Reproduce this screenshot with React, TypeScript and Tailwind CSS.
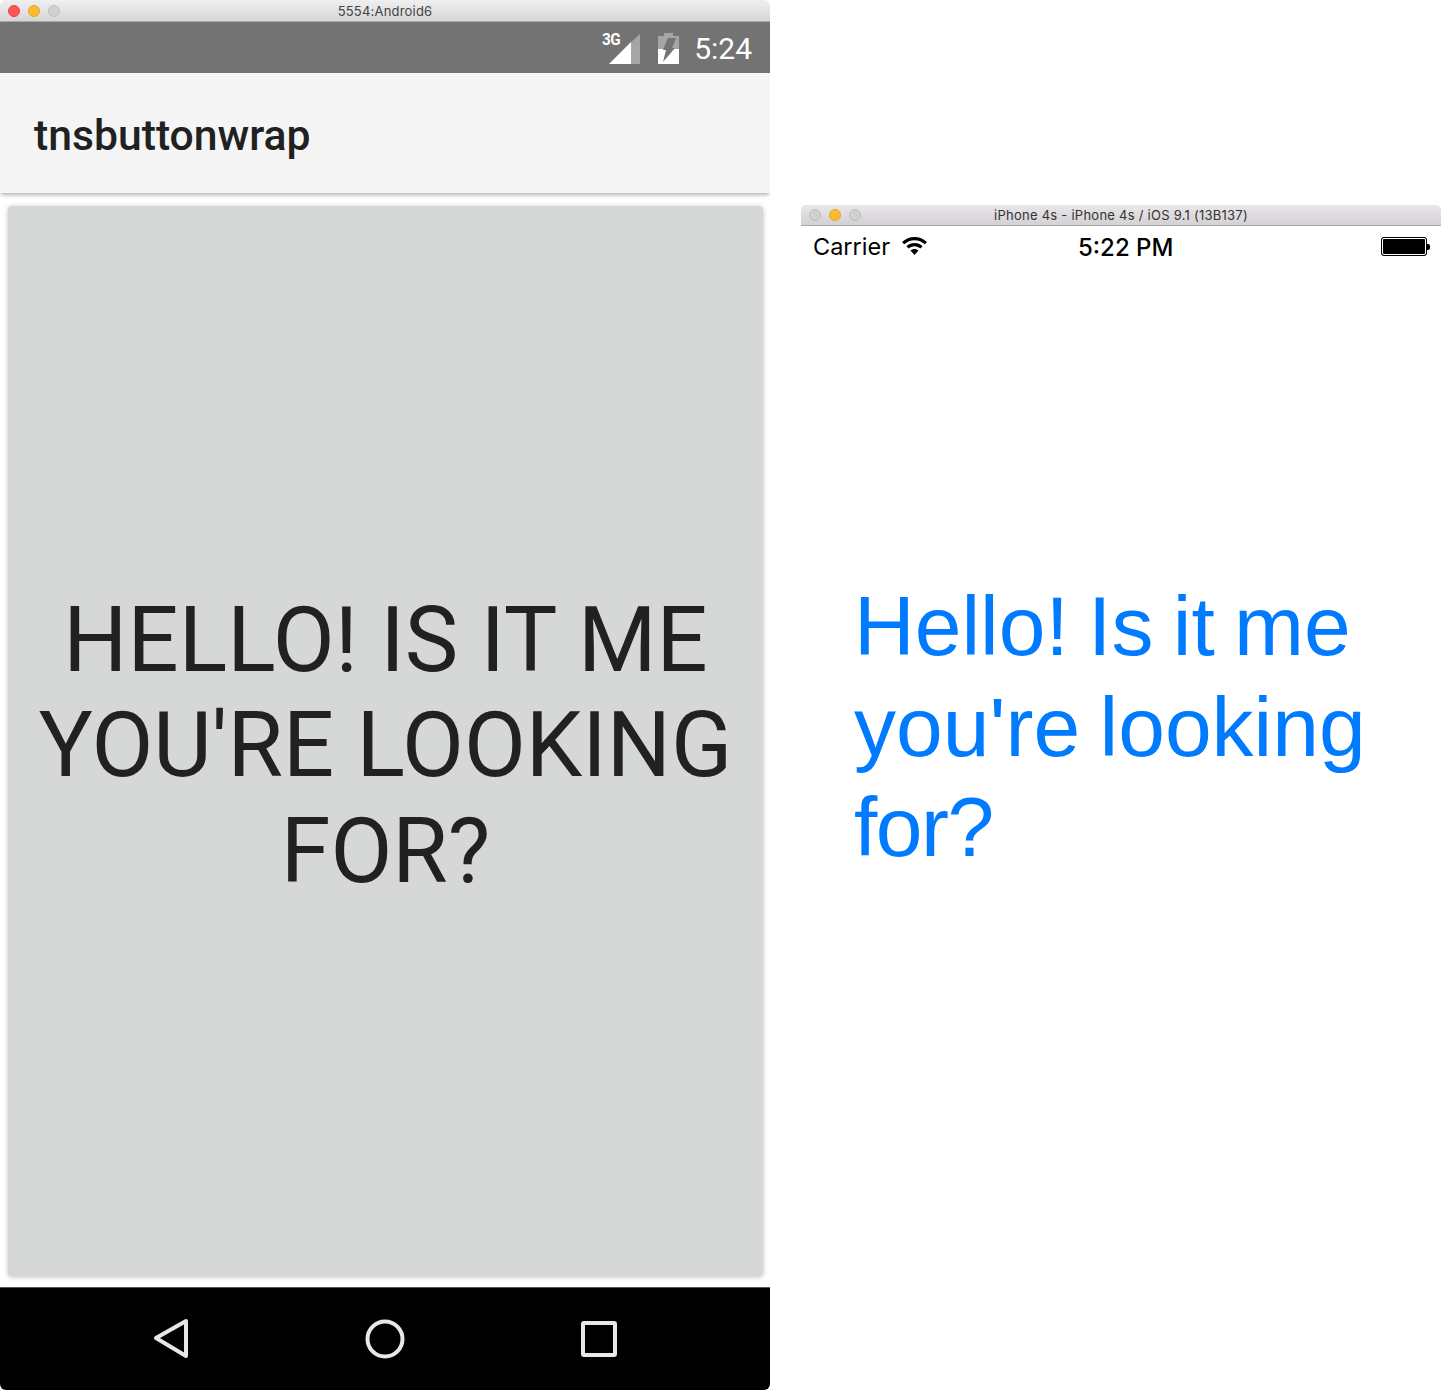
const sans = "font-['Liberation_Sans',sans-serif]";

function Lights({ first }: { first: string }) {
  return (
    <div className="flex gap-2 items-center">
      <span className={`w-3 h-3 rounded-full border ${first}`} />
      <span className="w-3 h-3 rounded-full border bg-[#fdb92f] border-[#e5a52a]" />
      <span className="w-3 h-3 rounded-full border bg-[#d0d0d0] border-[#bdbdbd]" />
    </div>
  );
}

function AndroidWindow() {
  return (
    <div className="w-[770px] h-[1390px] flex flex-col shrink-0 overflow-hidden font-['Roboto',sans-serif]">
      <div className="relative h-[22px] flex items-center pl-2 rounded-t-[6px] bg-gradient-to-b from-[#f0f0f0] to-[#d6d6d6] border-b border-[#a8a8a8]">
        <Lights first="bg-[#fc5753] border-[#df4744]" />
        <span className="absolute inset-0 text-center text-[13px] leading-[23px] text-[#444] font-['Inter',sans-serif] tracking-[0.2px]">5554:Android6</span>
      </div>
      <div className="h-[51px] bg-[#737373] flex items-center justify-end pr-[18px] text-white">
        <div className="relative w-[40px] h-[34px] mr-[18px]">
          <span className="absolute left-[2px] top-[-1px] text-[17px] leading-[18px] font-bold tracking-[-0.5px] scale-x-90 origin-left">3G</span>
          <svg className="absolute left-[9px] top-[3px]" width="31" height="30" viewBox="0 0 31 30">
            <path d="M22 8 L31 0 V30 H22Z" fill="#a5a5a5" />
            <path d="M0 30 L22 8 V30Z" fill="#fff" />
          </svg>
        </div>
        <svg className="mr-[15px] mt-[2px]" width="21" height="31" viewBox="0 0 21 31">
          <path d="M6 0H15V3H21V16H0V3H6Z" fill="#a5a5a5" />
          <path d="M0 16H21V31H0Z" fill="#fff" />
          <path d="M10 5 H18 L14 15 H17 L5 29 L8 17 H5Z" fill="#737373" />
        </svg>
        <span className="text-[30px] leading-none mt-[2px]">5:24</span>
      </div>
      <div className="relative z-10 h-[120px] bg-[#f5f5f5] flex items-center pl-[34px] shadow-[0_3px_4px_-1px_rgba(0,0,0,0.3)]">
        <span className="text-[42.7px] font-medium text-[#212121] mt-[4px]">tnsbuttonwrap</span>
      </div>
      <div className="flex-1 bg-white pt-[13px] pb-[11px] pl-2 pr-[7px] flex">
        <div className="flex-1 bg-[#d6d7d7] rounded-[4px] shadow-[0_1px_5px_rgba(0,0,0,0.25)] flex items-center justify-center text-center text-[#212121] text-[90px] leading-[105.5px]">
          <span className="mt-[10px] whitespace-nowrap">
            HELLO! IS IT ME
            <br />
            YOU'RE LOOKING
            <br />
            FOR?
          </span>
        </div>
      </div>
      <div className="h-[103px] bg-black rounded-b-[6px] border-t border-[#555] flex items-center relative">
        <svg className="absolute left-[153px] top-[30px]" width="36" height="41" viewBox="0 0 36 41" fill="none" stroke="#e8e8e8" strokeWidth="4" strokeLinejoin="round">
          <path d="M33 3 L3 20 L33 38Z" />
        </svg>
        <svg className="absolute left-[365px] top-[31px]" width="40" height="40" viewBox="0 0 40 40" fill="none" stroke="#e8e8e8" strokeWidth="4">
          <circle cx="20" cy="20" r="17.5" />
        </svg>
        <svg className="absolute left-[581px] top-[33px]" width="36" height="36" viewBox="0 0 36 36" fill="none" stroke="#e8e8e8" strokeWidth="4" strokeLinejoin="round">
          <rect x="2" y="2" width="32" height="32" rx="1" />
        </svg>
      </div>
    </div>
  );
}

function IosWindow() {
  return (
    <div className={`w-[640px] ml-[31px] mt-[205px] flex flex-col ${sans}`}>
      <div className="relative h-[21px] flex items-center pl-2 rounded-t-[5px] bg-gradient-to-b from-[#e9e7e9] to-[#d3d1d3] border-b border-[#a8a8a8]">
        <Lights first="bg-[#d0d0d0] border-[#bdbdbd]" />
        <span className="absolute inset-0 text-center text-[13px] leading-[21px] text-[#333] font-['Inter',sans-serif] tracking-[0.25px]">iPhone 4s - iPhone 4s / iOS 9.1 (13B137)</span>
      </div>
      <div className="relative h-[41px] flex items-center justify-between pl-[12px] pr-[11px] text-black">
        <div className="flex items-center gap-[12px] mt-[1px]">
          <span className="leading-none font-['Inter',sans-serif] font-normal text-[23.5px]">Carrier</span>
          <svg width="25" height="18" viewBox="0 0 25 18" className="mt-[-3px]">
            <path d="M12.5 0C7.7 0 3.4 1.9 0 5l2.2 2.3C5 4.8 8.6 3.2 12.5 3.2s7.5 1.6 10.3 4.1L25 5C21.6 1.9 17.3 0 12.5 0Z" />
            <path d="M12.5 6C9.4 6 6.600 7.200 4.400 9.200l2.300 2.400c1.600-1.400 3.600-2.300 5.800-2.300s4.200 0.900 5.800 2.300l2.300-2.400C18.400 7.200 15.600 6 12.500 6Z" />
            <path d="M12.500 12c-1.500 0-2.900 0.600-4 1.500l4 4.500 4-4.500C15.400 12.600 14 12 12.500 12Z" />
          </svg>
        </div>
        <span className="absolute left-[277px] top-[9px] text-[24px] leading-[26px] font-medium font-['Inter',sans-serif]">5:22 PM</span>
        <div className="flex items-center">
          <div className="w-[46px] h-[19px] rounded-[3px] border border-black bg-black outline outline-1 outline-white -outline-offset-2" />
          <div className="w-[3px] h-[6px] bg-black rounded-r-[2px]" />
        </div>
      </div>
      <div className="pl-[53px] pt-[309px] text-[#007aff] text-[84px] leading-[100.5px] whitespace-nowrap [word-spacing:-4px]">
        Hello! Is it me
        <br />
        you're looking
        <br />
        <span className="tracking-[-1.5px]">for?</span>
      </div>
    </div>
  );
}

export default function App() {
  return (
    <div className="w-[1441px] h-[1390px] flex bg-white overflow-hidden">
      <AndroidWindow />
      <IosWindow />
    </div>
  );
}
